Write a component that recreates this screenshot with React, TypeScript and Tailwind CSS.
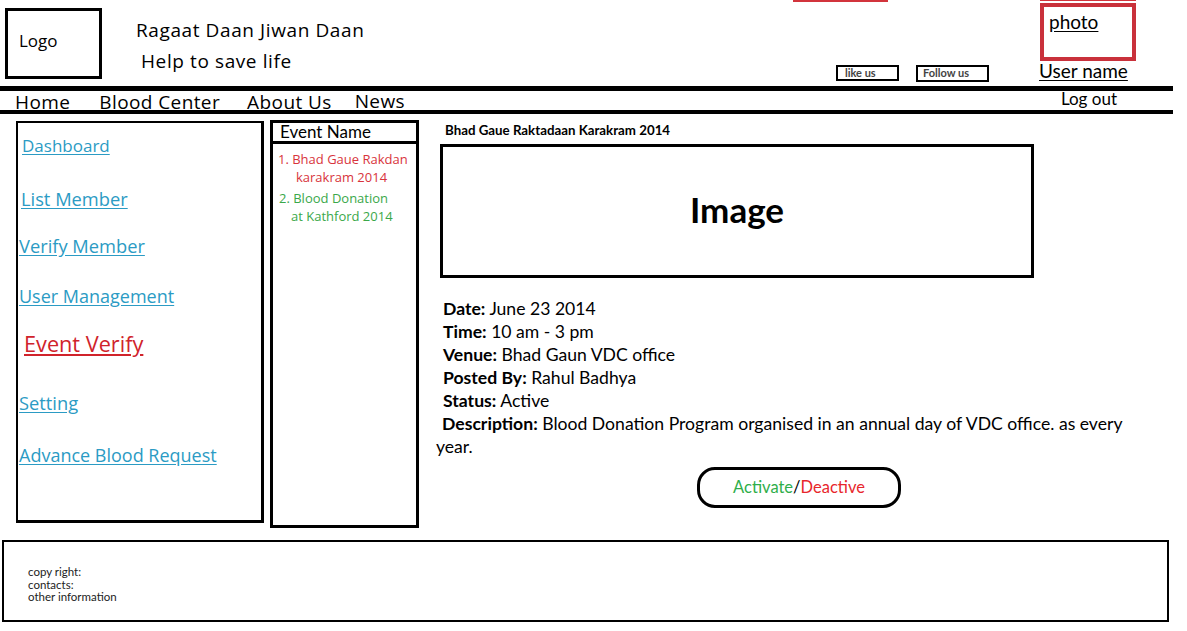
import React from "react";

const sideLinks = [
  { label: "Dashboard", cls: "mt-[12px] ml-[3px] text-[17px]" },
  { label: "List Member", cls: "mt-[31px] ml-[2px] text-[18.3px]" },
  { label: "Verify Member", cls: "mt-[25px] text-[18.3px]" },
  { label: "User Management", cls: "mt-[28px] text-[18px]" },
];

const details = [
  { k: "Date:", v: "June 23 2014" },
  { k: "Time:", v: "10 am - 3 pm" },
  { k: "Venue:", v: "Bhad Gaun VDC office" },
  { k: "Posted By:", v: " Rahul Badhya" },
  { k: "Status:", v: "Active" },
];

export default function App() {
  return (
    <div className="w-[1187px] h-[631px] bg-white text-black overflow-hidden font-['Open_Sans',sans-serif]">
      {/* header */}
      <div className="flex h-[86px]">
        <div className="mt-[8px] ml-[5px] w-[97px] h-[71px] border-[3px] border-black pl-[11px] pt-[17px] text-[17px]">
          Logo
        </div>
        <div className="ml-[34px] pt-[19px] w-[400px]">
          <p className="text-[19px] leading-[22px] tracking-[0.6px]">Ragaat Daan Jiwan Daan</p>
          <p className="ml-[5px] mt-[9px] text-[19px] leading-[22px] tracking-[0.6px]">Help to save life</p>
        </div>
        <div className="ml-[257px] w-[246px] flex flex-col">
          <div className="w-[95px] h-[2px] bg-[#d2343c]" />
          <div className="mt-[63px] ml-[43px] flex gap-[17px] font-['Lato',sans-serif] font-bold text-[11px] text-[#444]">
            <div className="w-[63px] h-[16px] border-2 border-black pl-[7px] leading-[12px]">like us</div>
            <div className="w-[73px] h-[17px] border-2 border-black pl-[5px] leading-[12px]">Follow us</div>
          </div>
        </div>
        <div className="ml-[1px] font-['Lato',sans-serif]">
          <div className="w-[96px] h-[1px] bg-[#d2343c]" />
          <div className="mt-[2px] w-[96px] h-[58px] border-[4px] border-[#c9313b] pl-[5px] pt-[4px] text-[19px] leading-[22px]">
            <span className="underline underline-offset-2">photo</span>
          </div>
          <p className="-ml-[1px] text-[19px] leading-[20px] underline underline-offset-2">User name</p>
        </div>
      </div>

      {/* nav */}
      <div className="w-[1173px] h-[28px] border-t-[5px] border-b-[4px] border-black flex items-center text-[19px] tracking-[0.4px]">
        <span className="ml-[15px] mt-[4px]">Home</span>
        <span className="ml-[29px] mt-[3px]">Blood Center</span>
        <span className="ml-[27px] mt-[3px]">About Us</span>
        <span className="ml-[23px] mt-[1px]">News</span>
        <span className="ml-auto mr-[56px] -mt-[3px] font-['Lato',sans-serif] text-[17px] tracking-normal">Log out</span>
      </div>

      {/* body */}
      <div className="flex items-start h-[426px]">
        <div className="mt-[7px] ml-[16px] w-[248px] h-[402px] border-l-2 border-t-2 border-r-[3px] border-b-[3px] border-black flex flex-col items-start pl-[1px] text-[#2b9bc4]">
          {sideLinks.map((l) => (
            <a key={l.label} className={`underline underline-offset-2 leading-[22px] ${l.cls}`}>
              {l.label}
            </a>
          ))}
          <a className="mt-[24px] ml-[5px] text-[21.7px] leading-[26px] text-[#d0232b] underline underline-offset-2">
            Event Verify
          </a>
          <a className="mt-[35px] text-[18.3px] leading-[22px] underline underline-offset-2">Setting</a>
          <a className="mt-[30px] text-[18px] leading-[22px] underline underline-offset-2">Advance Blood Request</a>
        </div>

        <div className="mt-[6px] ml-[6px] w-[149px] h-[408px] border-[3px] border-black">
          <div className="h-[21px] border-b-[3px] border-black pl-[7px] font-['Lato',sans-serif] text-[17px] leading-[18px]">
            Event Name
          </div>
          <ol className="pt-[6px] text-[13px] leading-[18px]">
            <li className="text-[#d8343c] pl-[5px]">
              <p>1. Bhad Gaue Rakdan</p>
              <p className="pl-[18px]">karakram 2014</p>
            </li>
            <li className="text-[#3aa84a] pl-[6px] mt-[3px]">
              <p>2. Blood Donation</p>
              <p className="pl-[12px]">at Kathford 2014</p>
            </li>
          </ol>
        </div>

        <div className="ml-[21px] mt-[8px] w-[700px] font-['Lato',sans-serif]">
          <p className="ml-[5px] text-[13.3px] font-bold leading-[16px]">Bhad Gaue Raktadaan Karakram 2014</p>
          <div className="mt-[6px] w-[594px] h-[134px] border-[3px] border-black flex items-center justify-center pb-[4px]">
            <span className="text-[35px] font-bold">Image</span>
          </div>
          <div className="mt-[19px] text-[17.6px] leading-[23px]">
            {details.map((d) => (
              <p key={d.k} className="ml-[3px]">
                <span className="font-bold">{d.k}</span> {d.v}
              </p>
            ))}
            <p className="ml-[2px]">
              <span className="font-bold">Description:</span>{" "}
              <span>Blood Donation Program organised in an annual day of VDC office. as every</span>
            </p>
            <p className="-ml-[4px]">year.</p>
          </div>
          <div className="mt-[9px] ml-[257px] w-[204px] h-[41px] border-[3px] border-black rounded-[18px] flex items-center justify-center text-[16.5px]">
            <span className="text-[#2fae4a]">Activate</span>
            <span>/</span>
            <span className="text-[#e8262c]">Deactive</span>
          </div>
        </div>
      </div>

      {/* footer */}
      <div className="ml-[2px] w-[1167px] h-[82px] border-2 border-black pl-[24px] pt-[24px] font-['Lato',sans-serif] text-[11.5px] leading-[12.5px] text-[#222]">
        <p>copy right:</p>
        <p>contacts:</p>
        <p>other information</p>
      </div>
    </div>
  );
}
